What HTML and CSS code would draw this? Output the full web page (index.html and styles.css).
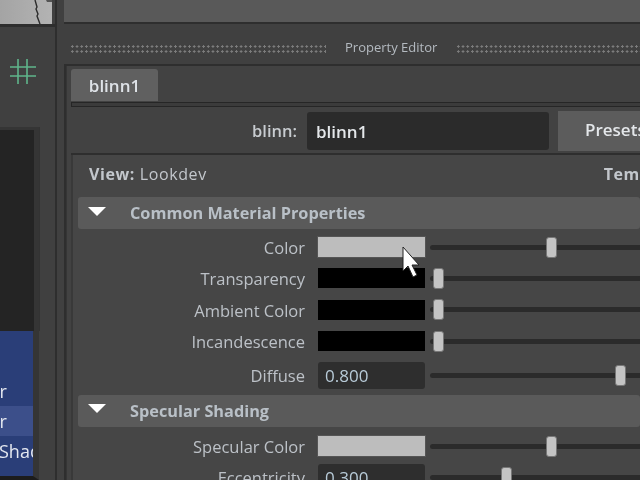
FILE: index.html
```html
<!DOCTYPE html>
<html lang="en">
<head>
<meta charset="utf-8">
<title>Property Editor</title>
<link rel="stylesheet" href="styles.css">
</head>
<body>
<div class="app">
  <aside class="left">
    <div class="thumb">
      <svg class="crack" width="52" height="24" viewBox="0 0 52 24"><path d="M35 0l2 7-1 2 2 5-1 2 3 8" fill="none" stroke="#2c2c2c" stroke-width="1.4"/><path d="M46 0h6v2h-5z" fill="#555"/></svg>
    </div>
    <div class="hash-wrap">
      <svg width="30" height="30" viewBox="0 0 30 30"><path d="M11 3v25M20 3v25M3 11h26M3 20h26" fill="none" stroke="#5fb58b" stroke-width="1.6"/></svg>
    </div>
    <div class="viewport"></div>
    <div class="list">
      <div class="item item-a">Color</div>
      <div class="item item-a selected">Color</div>
      <div class="item item-b">Shader</div>
    </div>
  </aside>
  <main class="right">
    <div class="topbar"></div>
    <div class="title">
      <span class="dots"></span>
      <span class="title-text">Property Editor</span>
      <span class="dots"></span>
    </div>
    <section class="panel">
      <div class="tabs"><div class="tab">blinn1</div></div>
      <div class="tabline"></div>
      <div class="namerow">
        <label class="name-label">blinn:</label>
        <div class="name-input">blinn1</div>
        <div class="presets">Presets*</div>
      </div>
      <div class="inner">
        <div class="viewrow">
          <span class="view"><b>View:</b> Lookdev</span>
          <b class="templ">Template</b>
        </div>
        <div class="header"><span class="tri"></span><span>Common Material Properties</span></div>
        <div class="rows">
          <div class="row"><span class="lab">Color</span><span class="swatch light"></span><span class="slider"><i style="left:116px"></i></span></div>
          <div class="row"><span class="lab">Transparency</span><span class="swatch black"></span><span class="slider"><i style="left:3px"></i></span></div>
          <div class="row"><span class="lab">Ambient Color</span><span class="swatch black"></span><span class="slider"><i style="left:3px"></i></span></div>
          <div class="row"><span class="lab">Incandescence</span><span class="swatch black"></span><span class="slider"><i style="left:3px"></i></span></div>
          <div class="row tall"><span class="lab">Diffuse</span><span class="swatch field">0.800</span><span class="slider"><i style="left:185px"></i></span></div>
        </div>
        <div class="header second"><span class="tri"></span><span>Specular Shading</span></div>
        <div class="rows lower">
          <div class="row"><span class="lab">Specular Color</span><span class="swatch light"></span><span class="slider"><i style="left:116px"></i></span></div>
          <div class="row"><span class="lab">Eccentricity</span><span class="swatch field">0.300</span><span class="slider"><i style="left:71px"></i></span></div>
        </div>
      </div>
    </section>
  </main>
</div>
<svg class="cursor" width="20" height="36" viewBox="0 0 20 36"><path d="M2 1v24l5-5 5 11 4-2-5-10h7z" fill="#fff" stroke="#222" stroke-width="1"/></svg>
</body>
</html>
```
FILE: styles.css
```css
* { box-sizing: border-box; }
html, body { margin: 0; height: 100%; background: #404040; overflow: hidden; }
body { font-family: "Open Sans", sans-serif; color: #c8ccd0; }
.app { display: flex; width: 640px; height: 480px; overflow: hidden; filter: blur(0.5px); }

.left { width: 57px; flex: none; display: flex; flex-direction: column; border-right: 2px solid #2e2e2e; background: #404040; }
.thumb { height: 27px; flex: none; background: linear-gradient(90deg, #a4a4a4, #b4b4b4); border-bottom: 3px solid #2e2e2e; position: relative; box-shadow: inset -3px 0 0 #404040; }
.crack { display: block; }
.hash-wrap { height: 100px; flex: none; padding: 29px 0 0 7px; }
.viewport { height: 204px; flex: none; width: 39px; background: #242424; border: solid #353535; border-width: 3px 5px 0 0; box-shadow: 1px 0 0 #333; }
.list { width: 39px; height: 149px; flex: none; background: #2a3e78; border-right: 6px solid #353535; overflow: hidden; border-bottom: 4px solid #1c1c1c; font-size: 18px; color: #e4e8f0; }
.item { height: 30px; line-height: 30px; white-space: nowrap; }
.item-a { margin-left: -38px; }
.item-a:first-child { margin-top: 45px; }
.selected { margin-left: 0; text-indent: -38px; background: #3c4f8a; }
.item-b { margin-left: -1px; }

.right { flex: 1; min-width: 0; display: flex; flex-direction: column; padding-left: 7px; background: #404040; }
.topbar { height: 24px; flex: none; background: #595959; border-bottom: 2px solid #2e2e2e; }
.title { height: 40px; flex: none; display: flex; align-items: center; gap: 19px; padding-left: 6px; padding-top: 6px; font-size: 13px; color: #b4bac0; }
.dots { flex: 1; min-width: 0; height: 9px; margin-top: 2px; background-image: radial-gradient(circle, #7c7c7c 1px, transparent 1.3px); background-size: 4.7px 5px; }
.dots:first-child { flex: none; width: 256px; }
.title-text { flex: none; white-space: nowrap; }

.panel { flex: 1; border: solid #2e2e2e; border-width: 2px 0 0 2px; padding: 3px 0 0 5px; background: #424242; min-height: 0; box-shadow: inset 1px 0 0 #353535; }
.tabs { display: flex; height: 32px; }
.tab { width: 87px; height: 32px; background: #606060; border-radius: 3px 3px 0 0; font-size: 17px; font-weight: 600; color: #dfe3e8; line-height: 34px; text-align: center; }
.tabline { height: 5px; margin-top: 1px; border: 1px solid #262626; background: #3b3b3b; border-right: 0; }
.namerow { height: 46px; display: flex; align-items: center; padding-top: 1px; justify-content: flex-end; }
.name-label { font-size: 16.5px; font-weight: 600; margin-right: 10px; }
.name-input { width: 242px; height: 38px; background: #2b2b2b; border-radius: 3px; font-size: 17px; font-weight: 600; color: #e4e7ea; line-height: 40px; padding-left: 9px; margin-right: 9px; }
.presets { width: 82px; flex: none; height: 40px; background: #5c5c5c; font-size: 17px; font-weight: 600; color: #e4e7ea; line-height: 38px; padding-left: 27px; white-space: nowrap; overflow: hidden; }
.inner { border: solid #2e2e2e; border-width: 2px 0 0 0; height: 340px; padding: 0 0 0 7px; background: #464646; box-shadow: inset 2px 0 0 #393939; overflow: hidden; }
.viewrow { height: 42px; display: flex; justify-content: space-between; align-items: center; padding: 0 0 4px 11px; font-size: 16px; letter-spacing: 0.6px; color: #c3c7cc; white-space: nowrap; }
.view b { font-weight: 700; }
.templ { font-weight: 700; margin-right: -44px; }
.header { height: 32px; background: #5a5a5a; border-radius: 3px; display: flex; align-items: center; font-size: 16.3px; font-weight: 700; color: #b9c0c7; padding-left: 10px; white-space: nowrap; }
.tri { width: 0; height: 0; border: solid transparent; border-width: 9px 9px 0; border-top-color: #fff; margin-right: 24px; margin-top: -4px; }
.second { margin-top: 4px; }
.rows { padding-top: 2.5px; display: flex; flex-direction: column; }
.lower { padding-top: 3.5px; }
.row { display: flex; align-items: center; height: 31.3px; }
.tall { margin-top: 3px; }
.lab { width: 227px; padding-top: 1px; text-align: right; font-size: 16.5px; color: #bcc1c7; white-space: nowrap; flex: none; }
.swatch { width: 107px; height: 20px; margin-left: 13px; flex: none; }
.light { background: #bdbdbd; box-shadow: 0 0 0 1px #555; }
.black { background: #000; }
.field { height: 27px; background: #2e2e2e; border-radius: 3px; font-size: 17px; color: #b8cbd8; line-height: 28px; padding-left: 7px; }
.slider { position: relative; width: 214px; height: 5px; margin-left: 5px; flex: none; background: #2b2b2b; border-radius: 3px 0 0 3px; }
.slider i { position: absolute; top: -8px; width: 11px; height: 21px; background: #c4c4c4; border: 1px solid #777; border-radius: 3px; }
.cursor { position: absolute; left: 401px; top: 246px; }
```
